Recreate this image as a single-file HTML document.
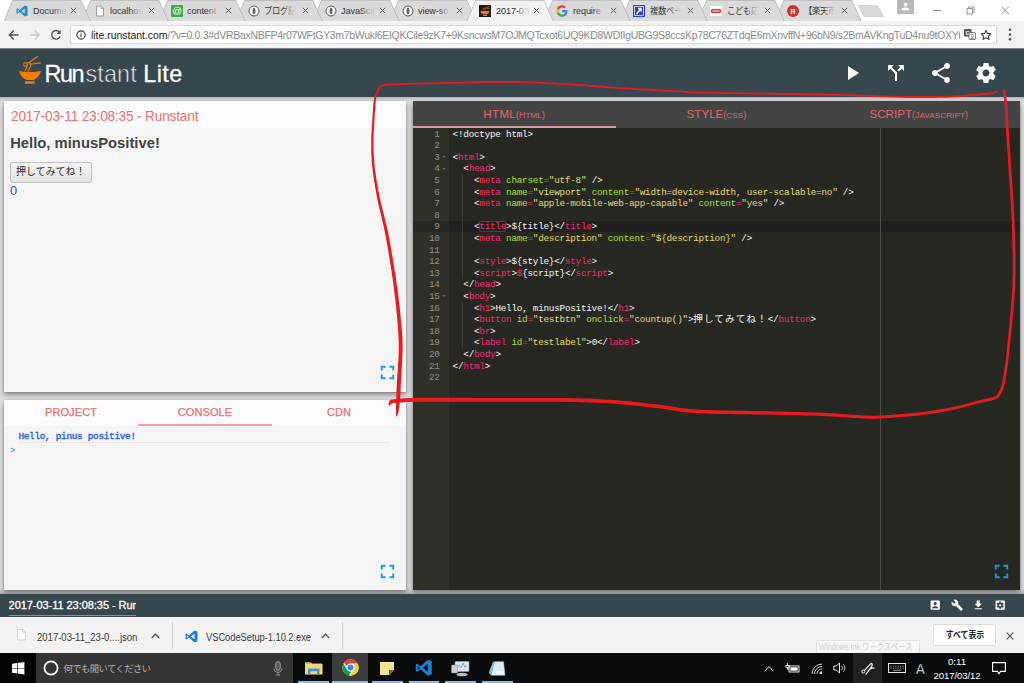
<!DOCTYPE html>
<html lang="ja">
<head>
<meta charset="utf-8">
<title>Runstant Lite</title>
<style>
*{box-sizing:border-box;margin:0;padding:0}
html,body{width:1024px;height:683px;overflow:hidden;background:#fff}
body{position:relative;font-family:"Liberation Sans","Noto Sans CJK JP",sans-serif;color:#333}
.abs{position:absolute}
svg{display:block;overflow:visible}
/* ---------- chrome tab strip ---------- */
#tabstrip{left:0;top:0;width:1024px;height:21px;background:#fff;overflow:hidden}
.tab{position:absolute;top:0;height:21px;width:90px;font-size:9.8px;line-height:20px;color:#333;white-space:nowrap}
.tab svg.shape{position:absolute;left:0;top:0}
.tab .lbl{position:absolute;left:28.600px;top:1px;width:36px;overflow:hidden;height:20px;letter-spacing:-0.1px;transform:scaleX(.93);transform-origin:0 0;width:34.500px}
.tab .lbl:after{content:"";position:absolute;right:0;top:0;width:14px;height:20px;background:linear-gradient(90deg,rgba(218,218,218,0),#dadada)}
.tab.act .lbl:after{background:linear-gradient(90deg,rgba(242,242,242,0),#f2f2f2)}
.tab .cj{font-size:9.300px;letter-spacing:-0.3px;transform:scaleX(.89)}
.tab .x{position:absolute;left:66px;top:7px;width:7px;height:7px}
.tab .fav{position:absolute;left:12px;top:5px;width:12px;height:12px}
/* ---------- toolbar ---------- */
#toolbar{left:0;top:21px;width:1024px;height:28px;background:#f2f2f2;border-bottom:1px solid #7d8489}
#urlbox{left:69.500px;top:4px;width:927.500px;height:19px;background:#fff;border:1px solid #d9d9d9;border-radius:2px;overflow:hidden}
#url{left:20.500px;top:0;font-size:10.5px;line-height:18px;white-space:nowrap;color:#8a8a8a;letter-spacing:-0.31px}
#url b{font-weight:normal;color:#222;letter-spacing:-0.03px}
/* ---------- app ---------- */
#header{left:0;top:49px;width:1024px;height:48px;background:#37474f}
#main{left:0;top:97px;width:1024px;height:497px;background:#dedede}
.card{position:absolute;box-shadow:0 2.5px 5px rgba(0,0,0,.42),0 0 2px rgba(0,0,0,.15)}
#footer{left:0;top:594px;width:1024px;height:23px;background:#37474f}
#dlbar{left:0;top:617px;width:1024px;height:36px;background:#f2f2f2}
#taskbar{left:0;top:653px;width:1024px;height:30px;background:#0a0b0d}
</style>
</head>
<body>
<div id="tabstrip" class="abs">
<div class="tab" style="left:775.4px"><svg class="shape" width="90" height="21" viewBox="0 0 90 21"><path d="M0 21 L8.500 0.500 H77 L86.200 21z" fill="#dadada"/><path d="M0 21 L8.500 0.500 H77 L86.200 21" fill="none" stroke="#b4b4b4" stroke-width="0.800"/></svg><svg class="fav" viewBox="0 0 24 24"><circle cx="12" cy="12" r="12" fill="#c9372c"/><text x="12" y="17" font-size="14" font-weight="bold" fill="#fff" text-anchor="middle" font-family="Liberation Sans,sans-serif">R</text></svg><span class="lbl cj">【楽天市</span><svg class="x" viewBox="0 0 10 10"><path stroke="#505050" stroke-width="1.300" fill="none" d="M1.200 1.200l7.600 7.600M8.800 1.200l-7.600 7.600"/></svg></div>
<div class="tab" style="left:698.3px"><svg class="shape" width="90" height="21" viewBox="0 0 90 21"><path d="M0 21 L8.500 0.500 H77 L86.200 21z" fill="#dadada"/><path d="M0 21 L8.500 0.500 H77 L86.200 21" fill="none" stroke="#b4b4b4" stroke-width="0.800"/></svg><svg class="fav" viewBox="0 0 24 24"><rect y="2" width="24" height="20" fill="#fff"/><rect x="1" y="8" width="22" height="8" rx="4" fill="#e53935"/><rect x="5" y="11" width="14" height="2" fill="#fff"/></svg><span class="lbl cj">こども応</span><svg class="x" viewBox="0 0 10 10"><path stroke="#505050" stroke-width="1.300" fill="none" d="M1.200 1.200l7.600 7.600M8.800 1.200l-7.600 7.600"/></svg></div>
<div class="tab" style="left:621.2px"><svg class="shape" width="90" height="21" viewBox="0 0 90 21"><path d="M0 21 L8.500 0.500 H77 L86.200 21z" fill="#dadada"/><path d="M0 21 L8.500 0.500 H77 L86.200 21" fill="none" stroke="#b4b4b4" stroke-width="0.800"/></svg><svg class="fav" viewBox="0 0 24 24"><rect width="24" height="24" fill="#2b3fd6"/><rect x="3" y="3" width="18" height="18" fill="none" stroke="#fff" stroke-width="1.500"/><path stroke="#fff" stroke-width="3" fill="none" d="M7 18L16 7M10 7h6v6"/></svg><span class="lbl cj">複数ペー</span><svg class="x" viewBox="0 0 10 10"><path stroke="#505050" stroke-width="1.300" fill="none" d="M1.200 1.200l7.600 7.600M8.800 1.200l-7.600 7.600"/></svg></div>
<div class="tab" style="left:544.1px"><svg class="shape" width="90" height="21" viewBox="0 0 90 21"><path d="M0 21 L8.500 0.500 H77 L86.200 21z" fill="#dadada"/><path d="M0 21 L8.500 0.500 H77 L86.200 21" fill="none" stroke="#b4b4b4" stroke-width="0.800"/></svg><svg class="fav" viewBox="0 0 24 24"><path fill="#4285f4" d="M23 12.300c0-.8-.1-1.600-.2-2.300H12v4.500h6.200c-.3 1.400-1.100 2.600-2.300 3.400v2.900h3.700C21.700 18.800 23 15.800 23 12.300z"/><path fill="#34a853" d="M12 23.500c3.100 0 5.700-1 7.600-2.800l-3.700-2.900c-1 .7-2.300 1.100-3.900 1.100-3 0-5.500-2-6.400-4.700H1.800v3C3.700 21 7.500 23.500 12 23.500z"/><path fill="#fbbc05" d="M5.600 14.200c-.2-.7-.4-1.400-.4-2.200s.1-1.500.4-2.200v-3H1.800C1 8.400.5 10.100.5 12s.5 3.600 1.300 5.200z"/><path fill="#ea4335" d="M12 5.100c1.700 0 3.200.6 4.400 1.700l3.300-3.300C17.700 1.600 15.100.5 12 .5 7.500.5 3.700 3 1.800 6.800l3.800 3C6.500 7.100 9 5.100 12 5.100z"/></svg><span class="lbl">require</span><svg class="x" viewBox="0 0 10 10"><path stroke="#505050" stroke-width="1.300" fill="none" d="M1.200 1.200l7.600 7.600M8.800 1.200l-7.600 7.600"/></svg></div>
<div class="tab" style="left:389.9px"><svg class="shape" width="90" height="21" viewBox="0 0 90 21"><path d="M0 21 L8.500 0.500 H77 L86.200 21z" fill="#dadada"/><path d="M0 21 L8.500 0.500 H77 L86.200 21" fill="none" stroke="#b4b4b4" stroke-width="0.800"/></svg><svg class="fav" viewBox="0 0 24 24"><circle cx="12" cy="12" r="10" fill="#fff" stroke="#555" stroke-width="2"/><ellipse cx="12" cy="12" rx="3" ry="6.500" fill="#666"/></svg><span class="lbl">view-so</span><svg class="x" viewBox="0 0 10 10"><path stroke="#505050" stroke-width="1.300" fill="none" d="M1.200 1.200l7.600 7.600M8.800 1.200l-7.600 7.600"/></svg></div>
<div class="tab" style="left:312.8px"><svg class="shape" width="90" height="21" viewBox="0 0 90 21"><path d="M0 21 L8.500 0.500 H77 L86.200 21z" fill="#dadada"/><path d="M0 21 L8.500 0.500 H77 L86.200 21" fill="none" stroke="#b4b4b4" stroke-width="0.800"/></svg><svg class="fav" viewBox="0 0 24 24"><circle cx="12" cy="12" r="10" fill="#fff" stroke="#555" stroke-width="2"/><ellipse cx="12" cy="12" rx="3" ry="6.500" fill="#666"/></svg><span class="lbl">JavaScri</span><svg class="x" viewBox="0 0 10 10"><path stroke="#505050" stroke-width="1.300" fill="none" d="M1.200 1.200l7.600 7.600M8.800 1.200l-7.600 7.600"/></svg></div>
<div class="tab" style="left:235.7px"><svg class="shape" width="90" height="21" viewBox="0 0 90 21"><path d="M0 21 L8.500 0.500 H77 L86.200 21z" fill="#dadada"/><path d="M0 21 L8.500 0.500 H77 L86.200 21" fill="none" stroke="#b4b4b4" stroke-width="0.800"/></svg><svg class="fav" viewBox="0 0 24 24"><circle cx="12" cy="12" r="10" fill="#fff" stroke="#555" stroke-width="2"/><ellipse cx="12" cy="12" rx="3" ry="6.500" fill="#666"/></svg><span class="lbl cj">ブログ記</span><svg class="x" viewBox="0 0 10 10"><path stroke="#505050" stroke-width="1.300" fill="none" d="M1.200 1.200l7.600 7.600M8.800 1.200l-7.600 7.600"/></svg></div>
<div class="tab" style="left:158.6px"><svg class="shape" width="90" height="21" viewBox="0 0 90 21"><path d="M0 21 L8.500 0.500 H77 L86.200 21z" fill="#dadada"/><path d="M0 21 L8.500 0.500 H77 L86.200 21" fill="none" stroke="#b4b4b4" stroke-width="0.800"/></svg><svg class="fav" viewBox="0 0 24 24"><rect width="24" height="24" rx="2" fill="#3fae4a"/><text x="12" y="17.500" font-size="19" font-weight="normal" fill="#fff" text-anchor="middle" font-family="Liberation Sans,sans-serif">@</text></svg><span class="lbl">content</span><svg class="x" viewBox="0 0 10 10"><path stroke="#505050" stroke-width="1.300" fill="none" d="M1.200 1.200l7.600 7.600M8.800 1.200l-7.600 7.600"/></svg></div>
<div class="tab" style="left:81.5px"><svg class="shape" width="90" height="21" viewBox="0 0 90 21"><path d="M0 21 L8.500 0.500 H77 L86.200 21z" fill="#dadada"/><path d="M0 21 L8.500 0.500 H77 L86.200 21" fill="none" stroke="#b4b4b4" stroke-width="0.800"/></svg><svg class="fav" viewBox="0 0 24 24"><path fill="#fafafa" stroke="#8a8a8a" stroke-width="1.6" d="M5 2h9l5 5v15H5z"/><path fill="none" stroke="#8a8a8a" stroke-width="1.4" d="M14 2v5h5"/></svg><span class="lbl">localhos</span><svg class="x" viewBox="0 0 10 10"><path stroke="#505050" stroke-width="1.300" fill="none" d="M1.200 1.200l7.600 7.600M8.800 1.200l-7.600 7.600"/></svg></div>
<div class="tab" style="left:4.4px"><svg class="shape" width="90" height="21" viewBox="0 0 90 21"><path d="M0 21 L8.500 0.500 H77 L86.200 21z" fill="#dadada"/><path d="M0 21 L8.500 0.500 H77 L86.200 21" fill="none" stroke="#b4b4b4" stroke-width="0.800"/></svg><svg class="fav" viewBox="0 0 24 24"><path fill="#2489ca" d="M17.5 1L7.6 10 3 6.500 1 7.500v9L3 17.500 7.600 14 17.500 23 23 20.800V3.200zM3.500 14.600V9.400L6.200 12zm14 2.600L10.600 12l6.900-5.200z"/></svg><span class="lbl">Docume</span><svg class="x" viewBox="0 0 10 10"><path stroke="#505050" stroke-width="1.300" fill="none" d="M1.200 1.200l7.600 7.600M8.800 1.200l-7.600 7.600"/></svg></div>
<div class="tab act" style="left:467.0px"><svg class="shape" width="90" height="21" viewBox="0 0 90 21"><path d="M0 21 L8.500 0.500 H77 L86.200 21z" fill="#f2f2f2"/><path d="M0 21 L8.500 0.500 H77 L86.200 21" fill="none" stroke="#b9b9b9" stroke-width="0.800"/></svg><svg class="fav" viewBox="0 0 24 24"><rect width="24" height="24" fill="#1f1a14"/><path fill="#f57c00" d="M3 12h18c0 4-3.500 7-9 7s-9-3-9-7zM8 20h8v2H8z"/><path stroke="#f57c00" stroke-width="1.300" fill="none" d="M9 11c-2-3 0-6 2-5s0 4 1 5M12 6l8-3M13 8l8-1"/></svg><span class="lbl">2017-03</span><svg class="x" viewBox="0 0 10 10"><path stroke="#505050" stroke-width="1.300" fill="none" d="M1.200 1.200l7.600 7.600M8.800 1.200l-7.600 7.600"/></svg></div>
<svg class="abs" style="left:858px;top:5px" width="27" height="12" viewBox="0 0 27 12"><path d="M0 0.500H19.500L25.500 11.500H6z" fill="#d8d8d8" stroke="#c4c4c4" stroke-width=".6"/></svg>
<div class="abs" style="left:897px;top:0;width:17px;height:14px;background:#b9b9b9"><svg class="abs" style="left:4px;top:2px" width="9" height="9" viewBox="0 0 24 24"><path fill="#fff" d="M12 12c2.800 0 5-2.200 5-5s-2.200-5-5-5-5 2.200-5 5 2.200 5 5 5zm0 2.500c-3.300 0-10 1.700-10 5V22h20v-2.500c0-3.300-6.700-5-10-5z"/></svg></div>
<svg class="abs" style="left:930px;top:4px" width="90" height="14" viewBox="0 0 90 14"><path stroke="#8a8a8a" stroke-width="1" fill="none" d="M3 6.500h8"/><path stroke="#8a8a8a" stroke-width=".9" fill="none" d="M37 4.500h5.500v5.500H37zM38.500 4.500V3H44v5.500h-1.500"/><path stroke="#8a8a8a" stroke-width=".9" fill="none" d="M71.500 2.500l7.500 7.500M79 2.500l-7.500 7.500"/></svg>
</div>
<div id="toolbar" class="abs">
<svg class="abs" style="left:8px;top:8px" width="56" height="12" viewBox="0 0 56 12"><path stroke="#505050" stroke-width="1.300" fill="none" d="M10.500 6H1.500M5.800 1.500L1.300 6l4.500 4.500"/><path stroke="#c8c8c8" stroke-width="1.300" fill="none" d="M22 6h9M26.700 1.500L31.200 6l-4.500 4.500"/><path stroke="#505050" stroke-width="1.400" fill="none" d="M51.300 3A4.300 4.300 0 1 0 52 7.500"/><path fill="#505050" d="M52.600 0.800v4.200h-4.200z"/></svg>
<div id="urlbox" class="abs">
<svg class="abs" style="left:5px;top:4px" width="10" height="10" viewBox="0 0 20 20"><circle cx="10" cy="10" r="8.300" fill="none" stroke="#3a3a3a" stroke-width="2.200"/><path stroke="#3a3a3a" stroke-width="2.200" d="M10 8.500v6M10 4.800v2.200"/></svg>
<div id="url" class="abs"><b>lite.runstant.com</b>/?v=0.0.3#dVRBaxNBFP4r07WFtGY3m7bWukl6EIQKCile9zK7+9KsncwsM7OJMQTcxot6UQ9KD8WDIIgUBG9S8ccsKp78C76ZTdqE6mXnvffN+96bN9/s2BmAVKngTuD4nu9tOXYtdqOk</div>
<div class="abs" style="left:889px;top:0;width:38px;height:17px;background:#fff"></div>
<svg class="abs" style="left:893.500px;top:3px" width="12" height="11" viewBox="0 0 24 22"><rect x="0" y="0" width="15" height="15" rx="1.500" fill="#555"/><text x="7.500" y="12" font-size="11" fill="#fff" text-anchor="middle" font-family="Liberation Sans,sans-serif" font-weight="bold">G</text><rect x="10" y="7" width="13" height="14" rx="1.500" fill="#fff" stroke="#555" stroke-width="1.500"/><text x="16.500" y="18.500" font-size="10" fill="#555" text-anchor="middle" font-family="Noto Sans CJK JP,sans-serif">文</text></svg>
<svg class="abs" style="left:909.500px;top:3px" width="12" height="12" viewBox="0 0 24 24"><path fill="none" stroke="#444" stroke-width="2.200" stroke-linejoin="round" d="M12 2.500l2.900 6.300 6.800.700-5.100 4.600 1.500 6.800L12 17.400l-6.100 3.500 1.500-6.800L2.300 9.500l6.800-.7z"/></svg>
</div>
<svg class="abs" style="left:1008px;top:7px" width="4" height="13" viewBox="0 0 4 13"><circle cx="2" cy="1.700" r="1.300" fill="#555"/><circle cx="2" cy="6.500" r="1.300" fill="#555"/><circle cx="2" cy="11.300" r="1.300" fill="#555"/></svg>
</div>
<style>
#logo{left:17px;top:5px}
#brand{left:44.600px;top:10.500px;font-size:23.400px;line-height:28px;color:#fff;white-space:nowrap}
#brand .r{letter-spacing:-1.5px;-webkit-text-stroke:.28px #fff}
#brand .s{color:#eef1f2;font-weight:normal;letter-spacing:0.15px;-webkit-text-stroke:.62px #37474f;margin-left:2.4px}
#brand .l{letter-spacing:0.4px;margin-left:6.400px;-webkit-text-stroke:.28px #fff}
.hic{position:absolute;top:12.300px;width:24px;height:24px}
#c1{left:4px;top:4px;width:402px;height:290.500px;background:#f5f5f5}
#c1 .ttl{left:0;top:0;width:100%;height:27px;background:#fafafa}
#c1 .ttl span{position:absolute;left:7.200px;top:7px;font-size:14.400px;line-height:16px;letter-spacing:-0.18px;transform:scaleX(.948);transform-origin:0 0;color:#e57373;white-space:nowrap}
#c1 h1{position:absolute;left:6.200px;top:33.300px;font-size:14.800px;line-height:18px;font-weight:bold;color:#444;white-space:nowrap}
#c1 .btn{left:5.500px;top:61px;width:82.500px;height:20.500px;border:1px solid #c3c3c3;border-radius:2px;background:linear-gradient(#f4f4f4,#e2e2e2);font-size:10px;line-height:18.500px;text-align:center;color:#2c2c2c;font-family:"Liberation Sans","Noto Sans CJK JP",sans-serif;white-space:nowrap}
#c1 .zero{left:6px;top:83px;font-size:12.800px;line-height:14px;color:#4343ff}
#c2{left:4px;top:302.500px;width:402px;height:190.500px;background:#f5f5f5}
#c2 .tabs{left:0;top:0;width:100%;height:26.500px;background:#fafafa}
#c2 .tabs span{position:absolute;top:6.400px;-webkit-text-stroke:.25px #e57373;width:134px;text-align:center;font-size:11px;line-height:13px;color:#e57373;letter-spacing:0.1px}
#c2 .ind{left:134px;top:24.700px;width:134px;height:1.700px;background:#f0a0a0}
#c2 .log{left:14.400px;top:31.500px;width:372px;height:12.400px;border-bottom:1px solid #e6e6e6;font-family:"Liberation Mono",monospace;font-weight:normal;-webkit-text-stroke:.4px #2c62f0;font-size:9.300px;line-height:12px;letter-spacing:-0.244px;color:#2c62f0;white-space:pre}
#c2 .pr{left:6px;top:45px;font-family:"Liberation Mono",monospace;font-weight:bold;font-size:8.600px;line-height:12px;color:#5aa7e8}
#ed{left:413px;top:4px;width:607px;height:489px;background:#272822;overflow:hidden}
#ed .tabs{left:0;top:0;width:100%;height:27px;background:#444}
#ed .tabs .t{position:absolute;top:6px;width:202.300px;text-align:center;font-size:11.600px;line-height:14px;color:#e0676b;white-space:nowrap}
#ed .tabs .t small{font-size:8.700px;letter-spacing:0.1px}
#ed .tabs .t small b{font-weight:normal;font-size:8.100px;letter-spacing:0.1px}
#ed .ind{left:0;top:25px;width:203px;height:2px;background:#d89ca0}
#ed .gutter{left:0;top:27px;width:36px;height:462px;background:#2f3129}
#ed .actl{left:0;top:119.800px;width:607px;height:11.600px;background:#202020}
#ed .actg{left:0;top:119.800px;width:36px;height:11.600px;background:#272727}
#ed .pm{left:466.700px;top:27px;width:1px;height:462px;background:#4b4c47}
#ed .guide{width:1px;background:#3b3a32;left:48.900px}
.ln,.gn{position:absolute;height:11.600px;line-height:11.600px;font-family:"Liberation Mono",monospace;font-size:9.300px;white-space:pre}
.ln{left:39.600px;letter-spacing:-0.235px;color:#f8f8f2}
.gn{left:0;width:26.500px;text-align:right;color:#8f908a;letter-spacing:-0.280px}
.gn .fold{position:absolute;left:29px;top:4.500px;border-left:2px solid transparent;border-right:2px solid transparent;border-top:2.500px solid #66675f}
.w{color:#f8f8f2}.p{color:#f92672}.g{color:#a6e22e}.y{color:#e6db74}
.jp{font-family:"Noto Sans CJK JP",sans-serif;font-size:9.600px;letter-spacing:1.090px;line-height:1px}
.box{box-shadow:inset 0 0 0 1px #454545}
.fic{position:absolute;top:5.300px;width:12.400px;height:12.400px}
#footer .t{left:8.600px;top:4px;width:127.500px;height:17.800px;border-bottom:1px solid #87939a;-webkit-text-stroke:.3px #fff;font-size:11px;line-height:14px;color:#fff;white-space:nowrap;overflow:hidden;letter-spacing:-0.05px}
</style>
<div id="header" class="abs">
<svg id="logo" class="abs" width="26" height="31" viewBox="0 0 26 31">
<path fill="#f57c00" d="M2.200 16.700c3 1.700 16.500 1.700 21.600 0 -.4 4.600-4 7.800-7.300 9.200H9.600C6.200 24.500 2.700 21.300 2.200 16.700zM8.200 27.300h9.200l.5 2.400H7.700z"/>
<path fill="none" stroke="#f57c00" stroke-width="1.100" stroke-linecap="round" d="M12.100 8.500L20.300 2.700M13.400 10.200L23.600 8.850"/>
<circle cx="8.500" cy="10.600" r="1.900" fill="none" stroke="#f57c00" stroke-width="1.100"/>
<path fill="none" stroke="#f57c00" stroke-width="1.100" stroke-linecap="round" d="M9.900 9.100c1-.5 2.100-.4 2.900 0M9.800 12c.5 1.100-.2 1.800-.6 2.800s-.9 1.500-1.300 2.300M12.800 9.100c.9.900 1 2.200.5 3.500-.5 1.300-1.300 2.900-2 5"/>
</svg>
<div id="brand" class="abs"><span class="r">Run</span><span class="s">stant</span><span class="l">Lite</span></div>
<svg class="hic" style="left:840.200px" viewBox="0 0 24 24"><path fill="#fff" d="M8 5v14l11-7z"/></svg>
<svg class="hic" style="left:884px" viewBox="0 0 24 24"><path fill="#fff" d="M14 4l2.290 2.290-2.880 2.880 1.420 1.420 2.880-2.880L20 10V4zm-4 0H4v6l2.290-2.290 4.710 4.700V20h2v-8.410l-5.290-5.300z"/></svg>
<svg class="hic" style="left:929px" viewBox="0 0 24 24"><path fill="#fff" d="M18 16.080c-.76 0-1.440.3-1.960.77L8.910 12.700c.05-.23.090-.46.090-.7s-.04-.47-.09-.7l7.050-4.110c.54.5 1.250.81 2.040.81 1.660 0 3-1.340 3-3s-1.340-3-3-3-3 1.340-3 3c0 .24.040.47.090.7L8.040 9.810C7.500 9.310 6.790 9 6 9c-1.660 0-3 1.340-3 3s1.340 3 3 3c.79 0 1.500-.31 2.040-.81l7.120 4.160c-.05.21-.08.43-.08.65 0 1.610 1.310 2.920 2.920 2.920 1.610 0 2.920-1.310 2.920-2.920s-1.310-2.920-2.920-2.920z"/></svg>
<svg class="hic" style="left:973.900px" viewBox="0 0 24 24"><path fill="#fff" d="M19.430 12.980c.04-.32.070-.64.070-.98s-.03-.66-.07-.98l2.110-1.650c.19-.15.240-.42.120-.64l-2-3.460c-.12-.22-.39-.3-.61-.22l-2.490 1c-.52-.4-1.080-.73-1.690-.98l-.38-2.650C14.460 2.180 14.250 2 14 2h-4c-.25 0-.46.180-.49.420l-.38 2.650c-.61.250-1.170.59-1.690.98l-2.490-1c-.23-.09-.49 0-.61.220l-2 3.460c-.13.220-.07.490.12.640l2.110 1.650c-.04.320-.07.650-.07.980s.03.660.07.980l-2.110 1.650c-.19.150-.24.420-.12.640l2 3.460c.12.220.39.300.61.220l2.490-1c.52.400 1.080.73 1.690.98l.38 2.650c.03.240.24.420.49.420h4c.25 0 .46-.18.490-.42l.38-2.650c.61-.25 1.170-.59 1.690-.98l2.490 1c.23.090.49 0 .61-.22l2-3.460c.12-.22.070-.49-.12-.64l-2.110-1.650zM12 15.500c-1.930 0-3.500-1.570-3.500-3.500s1.570-3.500 3.500-3.500 3.500 1.570 3.500 3.500-1.570 3.500-3.500 3.500z"/></svg>
</div>
<div id="main" class="abs">
<div class="abs" style="left:0;top:0;width:1024px;height:4px;background:linear-gradient(#b0b4b6,#dedede)"></div>
<div class="abs" style="left:0;top:492px;width:1024px;height:5px;background:linear-gradient(rgba(0,0,0,0.02),rgba(0,0,0,.22))"></div>
<div id="c1" class="card">
<div class="ttl abs"><span>2017-03-11 23:08:35 - Runstant</span></div>
<h1>Hello, minusPositive!</h1>
<div class="btn abs">押してみてね！</div>
<div class="zero abs">0</div>
<svg class="abs" style="left:372px;top:260.3px" width="23" height="23" viewBox="0 0 24 24"><path fill="#119bea" d="M7 14H5v5h5v-2H7v-3zm-2-4h2V7h3V5H5v5zm12 7h-3v2h5v-5h-2v3zM14 5v2h3v3h2V5h-5z"/></svg>
</div>
<div id="c2" class="card">
<div class="tabs abs"><span style="left:0">PROJECT</span><span style="left:134px">CONSOLE</span><span style="left:268px">CDN</span></div>
<div class="ind abs"></div>
<div class="log abs">Hello, pinus positive!</div>
<div class="pr abs">&gt;</div>
<svg class="abs" style="left:372px;top:160.6px" width="23" height="23" viewBox="0 0 24 24"><path fill="#119bea" d="M7 14H5v5h5v-2H7v-3zm-2-4h2V7h3V5H5v5zm12 7h-3v2h5v-5h-2v3zM14 5v2h3v3h2V5h-5z"/></svg>
</div>
<div id="ed" class="card">
<div class="tabs abs"><div class="t" style="left:0;letter-spacing:.3px">HTML<small>(H<b>TML</b>)</small></div><div class="t" style="left:202.300px">STYLE<small>(<b>CSS</b>)</small></div><div class="t" style="left:404.600px">SCRIPT<small>(J<b>AVASCRIPT</b>)</small></div></div>
<div class="ind abs"></div>
<div class="gutter abs"></div>
<div class="actl abs"></div>
<div class="actg abs"></div>
<div class="pm abs"></div>
<div class="guide abs" style="top:73.400px;height:104.400px"></div>
<div class="guide abs" style="top:201px;height:46.400px"></div>
<div class="gn" style="top:27.5px">1</div>
<div class="gn" style="top:39.1px">2</div>
<div class="gn" style="top:50.7px">3<i class="fold"></i></div>
<div class="gn" style="top:62.3px">4<i class="fold"></i></div>
<div class="gn" style="top:73.9px">5</div>
<div class="gn" style="top:85.5px">6</div>
<div class="gn" style="top:97.1px">7</div>
<div class="gn" style="top:108.7px">8</div>
<div class="gn" style="top:120.3px">9</div>
<div class="gn" style="top:131.9px">10</div>
<div class="gn" style="top:143.5px">11</div>
<div class="gn" style="top:155.1px">12</div>
<div class="gn" style="top:166.7px">13</div>
<div class="gn" style="top:178.3px">14</div>
<div class="gn" style="top:189.9px">15<i class="fold"></i></div>
<div class="gn" style="top:201.5px">16</div>
<div class="gn" style="top:213.1px">17</div>
<div class="gn" style="top:224.7px">18</div>
<div class="gn" style="top:236.3px">19</div>
<div class="gn" style="top:247.9px">20</div>
<div class="gn" style="top:259.5px">21</div>
<div class="gn" style="top:271.1px">22</div>
<div class="ln" style="top:27.5px"><span class="w">&lt;!doctype html&gt;</span></div>
<div class="ln" style="top:39.1px"></div>
<div class="ln" style="top:50.7px"><span class="w">&lt;</span><span class="p">html</span><span class="w">&gt;</span></div>
<div class="ln" style="top:62.3px"><span class="w">  </span><span class="w">&lt;</span><span class="p">head</span><span class="w">&gt;</span></div>
<div class="ln" style="top:73.9px"><span class="w">    &lt;</span><span class="p">meta</span><span class="w"> </span><span class="g">charset</span><span class="p">=</span><span class="y">"utf-8"</span><span class="w"> /&gt;</span></div>
<div class="ln" style="top:85.5px"><span class="w">    &lt;</span><span class="p">meta</span><span class="w"> </span><span class="g">name</span><span class="p">=</span><span class="y">"viewport"</span><span class="w"> </span><span class="g">content</span><span class="p">=</span><span class="y">"width=device-width, user-scalable=no"</span><span class="w"> /&gt;</span></div>
<div class="ln" style="top:97.1px"><span class="w">    &lt;</span><span class="p">meta</span><span class="w"> </span><span class="g">name</span><span class="p">=</span><span class="y">"apple-mobile-web-app-capable"</span><span class="w"> </span><span class="g">content</span><span class="p">=</span><span class="y">"yes"</span><span class="w"> /&gt;</span></div>
<div class="ln" style="top:108.7px"></div>
<div class="ln" style="top:120.3px"><span class="w">    &lt;</span><span class="p box">title</span><span class="w">&gt;${title}&lt;/</span><span class="p">title</span><span class="w">&gt;</span></div>
<div class="ln" style="top:131.9px"><span class="w">    &lt;</span><span class="p">meta</span><span class="w"> </span><span class="g">name</span><span class="p">=</span><span class="y">"description"</span><span class="w"> </span><span class="g">content</span><span class="p">=</span><span class="y">"${description}"</span><span class="w"> /&gt;</span></div>
<div class="ln" style="top:143.5px"></div>
<div class="ln" style="top:155.1px"><span class="w">    &lt;</span><span class="p">style</span><span class="w">&gt;${style}&lt;/</span><span class="p">style</span><span class="w">&gt;</span></div>
<div class="ln" style="top:166.7px"><span class="w">    &lt;</span><span class="p">script</span><span class="w">&gt;</span><span class="p">$</span><span class="w">{script}&lt;/</span><span class="p">script</span><span class="w">&gt;</span></div>
<div class="ln" style="top:178.3px"><span class="w">  </span><span class="w">&lt;/</span><span class="p">head</span><span class="w">&gt;</span></div>
<div class="ln" style="top:189.9px"><span class="w">  </span><span class="w">&lt;</span><span class="p">body</span><span class="w">&gt;</span></div>
<div class="ln" style="top:201.5px"><span class="w">    </span><span class="w">&lt;</span><span class="p">h1</span><span class="w">&gt;</span><span class="w">Hello, minusPositive!</span><span class="w">&lt;/</span><span class="p">h1</span><span class="w">&gt;</span></div>
<div class="ln" style="top:213.1px"><span class="w">    &lt;</span><span class="p">button</span><span class="w"> </span><span class="g">id</span><span class="p">=</span><span class="y">"testbtn"</span><span class="w"> </span><span class="g">onclick</span><span class="p">=</span><span class="y">"countup()"</span><span class="w">&gt;</span><span class="w jp">押してみてね！</span><span class="w">&lt;/</span><span class="p">button</span><span class="w">&gt;</span></div>
<div class="ln" style="top:224.7px"><span class="w">    </span><span class="w">&lt;</span><span class="p">br</span><span class="w">&gt;</span></div>
<div class="ln" style="top:236.3px"><span class="w">    &lt;</span><span class="p">label</span><span class="w"> </span><span class="g">id</span><span class="p">=</span><span class="y">"testlabel"</span><span class="w">&gt;0&lt;/</span><span class="p">label</span><span class="w">&gt;</span></div>
<div class="ln" style="top:247.9px"><span class="w">  </span><span class="w">&lt;/</span><span class="p">body</span><span class="w">&gt;</span></div>
<div class="ln" style="top:259.5px"><span class="w">&lt;/</span><span class="p">html</span><span class="w">&gt;</span></div>
<div class="ln" style="top:271.1px"></div>
<svg class="abs" style="left:577px;top:458.8px" width="23" height="23" viewBox="0 0 24 24"><path fill="#119bea" d="M7 14H5v5h5v-2H7v-3zm-2-4h2V7h3V5H5v5zm12 7h-3v2h5v-5h-2v3zM14 5v2h3v3h2V5h-5z"/></svg>
</div>
</div>
<div id="footer" class="abs">
<div class="t abs">2017-03-11 23:08:35 - Runstant</div>
<svg class="fic" style="left:929.400px" viewBox="0 0 24 24"><path fill="#fff" d="M3 5v14c0 1.100.89 2 2 2h14c1.100 0 2-.9 2-2V5c0-1.100-.9-2-2-2H5c-1.110 0-2 .9-2 2zm12 4c0 1.660-1.340 3-3 3s-3-1.340-3-3 1.340-3 3-3 3 1.340 3 3zm-9 8c0-2 4-3.100 6-3.100s6 1.100 6 3.100v1H6v-1z"/></svg>
<svg class="fic" style="left:950.800px" viewBox="0 0 24 24"><path fill="#fff" d="M22.700 19l-9.100-9.100c.9-2.300.4-5-1.500-6.900-2-2-5-2.400-7.400-1.300L9 6 6 9 1.600 4.700C.4 7.100.9 10.100 2.900 12.100c1.900 1.900 4.600 2.400 6.900 1.500l9.100 9.100c.4.4 1 .4 1.400 0l2.300-2.300c.5-.4.5-1.100.1-1.400z"/></svg>
<svg class="fic" style="left:972.400px" viewBox="0 0 24 24"><path fill="#fff" d="M19 9h-4V3H9v6H5l7 7 7-7zM5 18v2h14v-2H5z"/></svg>
<svg class="fic" style="left:993.800px" viewBox="0 0 24 24"><path fill="#fff" d="M12 10c-1.100 0-2 .9-2 2s.9 2 2 2 2-.9 2-2-.9-2-2-2zm7-7H5c-1.110 0-2 .9-2 2v14c0 1.100.89 2 2 2h14c1.110 0 2-.9 2-2V5c0-1.100-.89-2-2-2zm-1.750 9c0 .23-.02.46-.05.68l1.480 1.160c.13.11.17.3.08.45l-1.400 2.420c-.09.15-.27.21-.43.15l-1.740-.7c-.36.28-.76.51-1.180.69l-.26 1.850c-.03.17-.18.3-.35.3h-2.800c-.17 0-.32-.13-.35-.29l-.26-1.850c-.43-.18-.82-.41-1.180-.69l-1.740.7c-.16.06-.34 0-.43-.15l-1.400-2.420c-.09-.15-.05-.34.08-.45l1.480-1.160c-.03-.23-.05-.46-.05-.69 0-.23.02-.46.05-.68l-1.480-1.160c-.13-.11-.17-.3-.08-.45l1.400-2.420c.09-.15.27-.21.43-.15l1.740.7c.36-.28.76-.51 1.180-.69l.26-1.850c.03-.17.18-.3.35-.3h2.800c.17 0 .32.130.35.290l.26 1.850c.43.180.82.410 1.180.690l1.740-.7c.16-.06.34 0 .43.150l1.400 2.420c.09.150.05.340-.08.450l-1.480 1.160c.03.230.05.460.05.690z"/></svg>
</div>
<style>
#dlbar{font-size:10px;color:#444}
#dlbar .fn{position:absolute;top:13.500px;line-height:14px;white-space:nowrap;letter-spacing:-0.05px;color:#3a3a3a;transform:scaleX(.962);transform-origin:0 0}
#dlbar .sep{position:absolute;top:5.200px;width:1px;height:26.500px;background:#cfcfcf}
#dlbar .chev{position:absolute;top:16px}
#showall{left:933px;top:7px;width:63px;height:21.500px;background:#fff;border:1px solid #dcdcdc;border-radius:2px;font-size:9.400px;line-height:19.500px;text-align:center;color:#222;font-weight:bold;white-space:nowrap}
#showall span{display:inline-block;transform:scaleX(.84)}
#tip{left:815.500px;top:23px;width:104px;height:14px;background:#f7f7f7;border:1px solid #e1e1e1;font-size:9.400px;line-height:12px;color:#cfcfcf;white-space:nowrap;padding-left:2px;letter-spacing:-0.1px;overflow:hidden}
#tip span{display:inline-block;transform:scaleX(.79);transform-origin:0 0}
#taskbar .start{left:0;top:0;width:36px;height:30px;background:#040404}
#taskbar .search{left:36px;top:0;width:257px;height:30px;background:#343434}
#taskbar .search span{position:absolute;left:27.500px;top:8.500px;font-size:9.300px;line-height:14px;color:#b4b4b4;white-space:nowrap;letter-spacing:-0.55px}
#taskbar .ul{position:absolute;top:27.600px;height:2.400px;background:#84bdee}
#taskbar .clock{position:absolute;left:925px;width:64px;text-align:center;color:#fff;font-size:9.600px;line-height:12px;white-space:nowrap}
</style>
<div id="dlbar" class="abs">
<svg class="abs" style="left:16.500px;top:12px" width="9" height="11.500" viewBox="0 0 9 11.500"><path d="M.5.5h5.300L8.500 3.200v7.800H.5z" fill="#fdfdfd" stroke="#c9c9c9" stroke-width=".8"/><path d="M5.800.5v2.700h2.700" fill="none" stroke="#c9c9c9" stroke-width=".7"/></svg>
<span class="fn" style="left:37px">2017-03-11_23-0....json</span>
<svg class="chev" style="left:151px" width="9" height="6" viewBox="0 0 9 6"><path d="M.8 5L4.500 1.200 8.200 5" fill="none" stroke="#505050" stroke-width="1.300"/></svg>
<div class="sep" style="left:172px"></div>
<svg class="abs" style="left:184.500px;top:12.500px" width="13" height="13" viewBox="0 0 24 24"><path fill="#1f7fd0" d="M17.500 1L7.600 10 3 6.500 1 7.500v9L3 17.500 7.600 14l9.900 9L23 20.800V3.200zM3.500 14.600V9.400L6.200 12zm14 2.600L10.600 12l6.900-5.200z"/></svg>
<span class="fn" style="left:206.300px;transform:scaleX(.935)">VSCodeSetup-1.10.2.exe</span>
<svg class="chev" style="left:320.500px" width="9" height="6" viewBox="0 0 9 6"><path d="M.8 5L4.500 1.200 8.200 5" fill="none" stroke="#505050" stroke-width="1.300"/></svg>
<div class="sep" style="left:342px"></div>
<div id="showall" class="abs"><span>すべて表示</span></div>
<svg class="abs" style="left:1006px;top:14.500px" width="8" height="8" viewBox="0 0 8 8"><path d="M.7.700l6.600 6.600M7.300.700L.7 7.300" stroke="#555" stroke-width="1.200" fill="none"/></svg>
<div id="tip" class="abs"><span>Windows Ink ワークスペース</span></div>
</div>
<div id="taskbar" class="abs">
<div class="start abs"><svg class="abs" style="left:12px;top:8.700px" width="12.400" height="12.400" viewBox="0 0 24 24"><path fill="#fff" d="M0 3.400L9.800 2v9.500H0zM11 1.800L24 0v11.500H11zM0 12.600h9.800v9.500L0 20.700zM11 12.600h13V24l-13-1.800z"/></svg></div>
<div class="search abs">
<svg class="abs" style="left:6.800px;top:7.400px" width="16" height="16" viewBox="0 0 16 16"><circle cx="8" cy="8" r="6.600" fill="none" stroke="#fff" stroke-width="1.700"/></svg>
<span>何でも聞いてください</span>
<svg class="abs" style="left:237px;top:7.500px" width="10" height="15" viewBox="0 0 10 15"><rect x="2.800" y=".7" width="4.400" height="8.600" rx="2.200" fill="#555" stroke="#a8a8a8" stroke-width=".9"/><path d="M1 7.500c0 2.300 1.800 3.800 4 3.800s4-1.500 4-3.800M5 11.300v2.500M3 14h4" fill="none" stroke="#a0a0a0" stroke-width=".9"/></svg>
</div>
<!-- chrome active bg -->
<div class="abs" style="left:332.400px;top:0;width:35.600px;height:30px;background:#3c3c3c"></div>
<!-- explorer -->
<svg class="abs" style="left:305px;top:8px" width="18" height="14" viewBox="0 0 18 14"><path fill="#e9b93f" d="M0 1.200h6l1.200 1.400H17v2H0z"/><rect x="0" y="3" width="17.500" height="10.500" fill="#f8d775"/><path fill="#3b97e3" d="M3 7.500h11.500v6H12v-3.200H5.500v3.200H3z"/></svg>
<!-- chrome -->
<svg class="abs" style="left:341.600px;top:6.300px" width="17" height="17" viewBox="0 0 48 48"><circle cx="24" cy="24" r="23" fill="#fff"/><path fill="#db4437" d="M24 1a23 23 0 0 1 19.900 11.500H24a11.500 11.500 0 0 0-10.800 7.600L5.400 10.600A23 23 0 0 1 24 1z"/><path fill="#0f9d58" d="M4.100 12.500l9.900 17.200a11.500 11.500 0 0 0 12.500 5.500L19.800 46.600A23 23 0 0 1 4.100 12.500z"/><path fill="#ffcd40" d="M44.900 14.500A23 23 0 0 1 22.300 47l9.600-17.200a11.500 11.500 0 0 0 .5-15.300z"/><circle cx="24" cy="24" r="10.300" fill="#fff"/><circle cx="24" cy="24" r="8.300" fill="#4285f4"/></svg>
<!-- sticky -->
<svg class="abs" style="left:380px;top:9px" width="14" height="13" viewBox="0 0 14 13"><path fill="#f5e48b" d="M0 0h14v8l-5 5H0z"/><path fill="#6b6440" d="M14 8l-5 5V8z"/></svg>
<!-- vscode -->
<svg class="abs" style="left:415px;top:5.700px" width="17.500" height="17.500" viewBox="0 0 24 24"><path fill="#1b7fd3" d="M17.500 1L7.600 10 3 6.500 1 7.500v9L3 17.500 7.600 14l9.900 9L23 20.800V3.200zM3.500 14.600V9.400L6.200 12zm14 2.600L10.600 12l6.900-5.200z"/></svg>
<!-- device -->
<svg class="abs" style="left:451px;top:7.500px" width="19" height="16" viewBox="0 0 19 16"><rect x="4" y=".5" width="14" height="10" rx="1" fill="#dfe5ea" stroke="#9aa3aa" stroke-width=".6"/><path d="M6 8l2-4 2 3 2-5 2 4 2-2" fill="none" stroke="#6aa6d8" stroke-width=".9"/><rect x=".5" y="4" width="6" height="8" rx=".8" fill="#c9ced2" stroke="#8e979e" stroke-width=".5"/><ellipse cx="11" cy="13.500" rx="5.500" ry="1.800" fill="#b8bfc5"/></svg>
<!-- notepad -->
<svg class="abs" style="left:488px;top:7.500px" width="18" height="16" viewBox="0 0 18 16"><path d="M6.500.8h9l1.500 13.500H3z" fill="#e8f3f8" stroke="#9fc3d2" stroke-width=".6"/><path d="M6.500.8L3 14.300.8 11.500 5 .8z" fill="#7fc3d6"/><path d="M6 3h9M5.600 5h9.700M5.200 7h10.300M4.800 9h10.800" stroke="#c0d9e2" stroke-width=".6"/></svg>
<div class="ul" style="left:298px;width:31px"></div>
<div class="ul" style="left:332.400px;width:35.600px"></div>
<div class="ul" style="left:371.700px;width:31px"></div>
<div class="ul" style="left:408.500px;width:30.500px"></div>
<div class="ul" style="left:445.400px;width:30.500px"></div>
<div class="ul" style="left:482.200px;width:31px"></div>
<!-- tray -->
<svg class="abs" style="left:764px;top:11.500px" width="10" height="7" viewBox="0 0 10 7"><path d="M.6 6.200L5 1.600 9.400 6.200" fill="none" stroke="#fff" stroke-width=".95"/></svg>
<svg class="abs" style="left:785px;top:9.500px" width="15" height="11" viewBox="0 0 15 11"><rect x="4" y="3" width="10" height="6" fill="none" stroke="#fff" stroke-width=".9"/><rect x="5.300" y="4.300" width="7.400" height="3.400" fill="#fff"/><path d="M2.500 0v3M.8 2.500h3.500v2.200H.8zM2.500 4.700V6.500H4" fill="none" stroke="#fff" stroke-width=".8"/></svg>
<svg class="abs" style="left:811px;top:9.500px" width="12" height="12" viewBox="0 0 12 12"><path d="M1 11A10 10 0 0 1 11 1" fill="none" stroke="#cfcfcf" stroke-width="1"/><path d="M3.500 11A7.500 7.500 0 0 1 11 3.500" fill="none" stroke="#cfcfcf" stroke-width="1"/><path d="M6 11a5 5 0 0 1 5-5" fill="none" stroke="#cfcfcf" stroke-width="1"/><path d="M8.300 11a2.700 2.700 0 0 1 2.700-2.700V11z" fill="#cfcfcf"/></svg>
<svg class="abs" style="left:833px;top:9px" width="14" height="12" viewBox="0 0 14 12"><path d="M.8 4h2.400L6.500 1v10L3.200 8H.8z" fill="none" stroke="#fff" stroke-width=".9"/><path d="M8.500 3.800a3 3 0 0 1 0 4.400M10.300 2.200a5.300 5.300 0 0 1 0 7.600" fill="none" stroke="#d0d0d0" stroke-width=".9"/></svg>
<div class="abs" style="left:852.800px;top:0;width:29.200px;height:30px;background:#1f2124"></div>
<svg class="abs" style="left:860px;top:8.500px" width="15" height="14" viewBox="0 0 15 14"><circle cx="3.300" cy="9.500" r="1.500" fill="none" stroke="#fff" stroke-width="1"/><path d="M4.500 8.500C6.500 6.500 8.500 3.800 10 2.300c1-1 2.300-.9 2.300.4 0 1.200-1.300 2.800-2.500 4.400C8.500 8.800 7 10.800 6 12.300M9.300 7.800c1.500-1.500 3.500-2.300 4.700-1.500" fill="none" stroke="#fff" stroke-width="1.100" stroke-linecap="round"/></svg>
<svg class="abs" style="left:888px;top:10px" width="18" height="10" viewBox="0 0 18 10"><rect x=".5" y=".5" width="17" height="9" fill="none" stroke="#fff" stroke-width=".9"/><path d="M2.500 3.200h13M2.500 5.200h13" stroke="#fff" stroke-width="1" stroke-dasharray="1 1.400"/><path d="M5 7.300h8" stroke="#fff" stroke-width=".8"/><rect x="1" y="1" width="16" height="8" fill="#101010" opacity=".35"/></svg>
<div class="abs" style="left:915.500px;top:6.500px;font-size:15px;line-height:17px;color:#fff;transform:scaleX(.88);transform-origin:0 0;-webkit-text-stroke:.35px #0a0b0d">A</div>
<div class="clock" style="top:3px">0:11</div>
<div class="clock" style="top:17px;letter-spacing:-0.1px">2017/03/12</div>
<svg class="abs" style="left:992px;top:9px" width="14" height="13" viewBox="0 0 14 13"><path d="M.6.600h12.800v8.800H8.500L7 11.800 5.500 9.400H.6z" fill="none" stroke="#fff" stroke-width="1.100"/></svg>
</div>
<svg id="scribble" class="abs" style="left:0;top:0;pointer-events:none" width="1024" height="683" viewBox="0 0 1024 683"><path fill="#ea1a1d" d="M997.1 90.3 L996.9 90.4 L996.6 90.5 L996.4 90.7 L996.1 90.9 L995.8 91.0 L995.5 91.2 L995.1 91.4 L994.8 91.6 L994.4 91.8 L994.1 91.9 L993.8 92.0 L993.4 92.1 L993.1 92.2 L992.8 92.3 L992.4 92.3 L992.1 92.4 L991.7 92.4 L991.3 92.4 L990.9 92.4 L990.4 92.4 L989.9 92.5 L989.3 92.5 L988.6 92.5 L987.9 92.6 L987.1 92.7 L986.2 92.8 L985.3 92.9 L984.3 93.0 L983.3 93.1 L982.2 93.2 L981.1 93.3 L980.0 93.4 L978.8 93.5 L977.7 93.6 L976.6 93.7 L975.5 93.8 L974.4 93.9 L973.4 94.0 L972.3 94.1 L971.2 94.2 L970.2 94.3 L969.1 94.3 L968.0 94.4 L966.8 94.5 L965.7 94.6 L964.5 94.7 L963.2 94.8 L961.9 94.9 L960.7 94.9 L959.5 95.0 L958.3 95.1 L957.1 95.2 L956.0 95.3 L954.7 95.4 L953.4 95.5 L951.9 95.6 L950.2 95.7 L948.4 95.7 L946.3 95.8 L944.0 95.9 L941.4 95.9 L938.5 95.9 L935.4 96.0 L932.1 96.0 L928.7 96.1 L925.1 96.1 L921.4 96.1 L917.6 96.1 L913.8 96.1 L909.9 96.1 L905.9 96.1 L902.0 96.0 L898.1 95.9 L894.1 95.8 L890.1 95.7 L886.0 95.6 L881.8 95.4 L877.6 95.2 L873.2 95.1 L868.8 94.9 L864.3 94.7 L859.6 94.6 L854.9 94.4 L850.0 94.3 L845.0 94.2 L840.0 94.1 L834.8 93.9 L829.6 93.8 L824.2 93.7 L818.8 93.6 L813.2 93.5 L807.6 93.4 L801.8 93.3 L795.8 93.2 L789.8 93.1 L783.6 93.0 L777.1 92.9 L770.0 92.8 L762.5 92.7 L754.8 92.6 L747.0 92.5 L739.1 92.4 L731.5 92.2 L724.1 92.1 L717.1 92.0 L710.7 91.9 L704.9 91.8 L700.0 91.7 L696.0 91.6 L692.7 91.5 L690.1 91.4 L688.1 91.2 L686.4 91.1 L685.1 91.0 L683.9 90.9 L682.8 90.8 L681.6 90.7 L680.2 90.5 L678.6 90.4 L676.6 90.3 L674.2 90.2 L671.8 90.0 L669.3 89.9 L666.7 89.8 L664.1 89.7 L661.4 89.5 L658.7 89.4 L656.0 89.3 L653.2 89.1 L650.5 89.0 L647.9 88.8 L645.2 88.7 L642.6 88.6 L640.0 88.4 L637.4 88.3 L634.8 88.1 L632.2 88.0 L629.7 87.8 L627.1 87.7 L624.5 87.5 L621.9 87.4 L619.3 87.2 L616.7 87.0 L614.1 86.9 L611.5 86.7 L608.9 86.5 L606.3 86.2 L603.6 86.0 L601.0 85.8 L598.4 85.6 L595.8 85.3 L593.2 85.1 L590.6 84.9 L588.0 84.7 L585.4 84.5 L582.8 84.3 L580.2 84.1 L577.6 84.0 L575.0 83.8 L572.4 83.6 L569.8 83.5 L567.2 83.3 L564.6 83.2 L562.0 83.0 L559.4 82.9 L556.8 82.8 L554.1 82.6 L551.5 82.5 L548.9 82.4 L546.3 82.2 L543.7 82.1 L541.1 82.0 L538.5 81.9 L535.9 81.7 L533.3 81.6 L530.7 81.5 L528.1 81.4 L525.4 81.3 L522.8 81.3 L520.2 81.2 L517.7 81.2 L515.4 81.1 L513.1 81.1 L511.0 81.1 L508.8 81.0 L506.6 81.0 L504.2 81.0 L501.7 81.1 L499.0 81.1 L496.0 81.1 L492.7 81.2 L489.0 81.2 L484.8 81.3 L480.1 81.3 L475.0 81.4 L469.5 81.5 L463.9 81.7 L458.1 81.8 L452.3 81.9 L446.6 82.0 L441.1 82.2 L435.8 82.3 L430.9 82.4 L426.5 82.5 L422.4 82.6 L418.4 82.7 L414.6 82.8 L411.0 82.9 L407.5 83.0 L404.2 83.1 L401.1 83.2 L398.2 83.3 L395.6 83.4 L393.1 83.5 L390.9 83.6 L389.0 83.7 L387.3 83.8 L386.0 83.9 L385.0 83.9 L384.3 84.0 L383.8 84.1 L383.4 84.2 L383.0 84.3 L382.8 84.4 L382.6 84.5 L382.6 84.6 L382.5 84.7 L382.2 84.8 L381.8 84.9 L381.4 85.1 L381.0 85.2 L380.7 85.4 L380.4 85.6 L380.1 85.8 L379.8 86.0 L379.5 86.3 L379.3 86.6 L379.0 86.8 L378.8 87.1 L378.5 87.4 L378.3 87.8 L378.0 88.2 L377.8 88.6 L377.6 89.0 L377.4 89.4 L377.2 89.8 L377.0 90.3 L376.8 90.7 L376.6 91.2 L376.4 91.7 L376.2 92.2 L376.1 92.6 L375.9 93.1 L375.7 93.5 L375.5 93.9 L375.3 94.3 L375.1 94.7 L374.9 95.2 L374.7 95.8 L374.6 96.4 L374.4 97.1 L374.2 97.9 L374.0 98.8 L373.9 99.9 L373.7 101.1 L373.6 102.4 L373.4 103.8 L373.3 105.4 L373.1 107.0 L373.0 108.7 L372.9 110.5 L372.8 112.3 L372.6 114.1 L372.5 116.0 L372.4 117.9 L372.3 119.7 L372.2 121.6 L372.1 123.6 L371.9 125.6 L371.8 127.7 L371.7 129.7 L371.5 131.9 L371.4 134.0 L371.3 136.2 L371.2 138.3 L371.2 140.5 L371.2 142.6 L371.2 144.7 L371.2 146.8 L371.2 148.8 L371.2 150.8 L371.3 152.9 L371.4 154.9 L371.5 156.9 L371.6 159.0 L371.7 161.0 L371.9 163.1 L372.1 165.3 L372.3 167.5 L372.6 169.7 L372.8 172.1 L373.2 174.5 L373.5 176.9 L373.9 179.4 L374.3 181.9 L374.7 184.4 L375.1 187.0 L375.6 189.5 L376.0 192.1 L376.5 194.6 L377.0 197.2 L377.5 199.7 L378.0 202.2 L378.5 204.7 L379.1 207.2 L379.7 209.7 L380.3 212.2 L380.9 214.7 L381.5 217.2 L382.1 219.7 L382.7 222.2 L383.3 224.7 L383.8 227.1 L384.3 229.6 L384.8 232.1 L385.3 234.6 L385.8 237.0 L386.2 239.5 L386.7 242.0 L387.1 244.4 L387.6 246.9 L388.0 249.4 L388.4 251.8 L388.8 254.3 L389.2 256.8 L389.6 259.3 L390.0 261.7 L390.4 264.2 L390.8 266.7 L391.2 269.2 L391.6 271.7 L391.9 274.2 L392.3 276.7 L392.7 279.2 L393.0 281.7 L393.4 284.2 L393.7 286.7 L394.0 289.2 L394.3 291.7 L394.6 294.2 L394.9 296.8 L395.2 299.3 L395.5 301.8 L395.8 304.3 L396.1 306.8 L396.3 309.3 L396.5 311.8 L396.8 314.2 L397.0 316.6 L397.2 319.0 L397.4 321.3 L397.6 323.6 L397.8 325.8 L398.0 328.1 L398.1 330.3 L398.3 332.5 L398.4 334.6 L398.5 336.7 L398.6 338.8 L398.7 340.9 L398.8 343.0 L398.8 345.0 L398.8 347.1 L398.8 349.1 L398.7 351.2 L398.7 353.2 L398.6 355.3 L398.5 357.3 L398.4 359.3 L398.3 361.2 L398.1 363.0 L398.0 364.7 L397.9 366.4 L397.9 367.9 L397.8 369.3 L397.7 370.4 L397.6 371.5 L397.6 372.4 L397.5 373.3 L397.4 374.1 L397.3 374.9 L397.3 375.7 L397.2 376.6 L397.1 377.6 L397.1 378.7 L397.0 379.9 L396.9 381.3 L396.9 382.8 L396.8 384.4 L396.7 386.0 L396.7 387.7 L396.6 389.5 L396.5 391.2 L396.5 392.9 L396.4 394.6 L396.3 396.1 L396.3 397.6 L396.3 398.9 L396.2 400.1 L396.2 401.2 L396.1 402.3 L396.1 403.3 L396.1 404.3 L396.1 405.2 L396.1 406.0 L396.0 406.8 L396.0 407.6 L396.0 408.4 L396.0 409.1 L396.0 409.9 L396.0 410.6 L396.0 411.3 L396.0 412.0 L396.0 412.6 L396.0 413.2 L396.0 413.8 L396.1 414.4 L396.1 414.9 L396.1 415.3 L396.1 415.8 L396.1 416.1 L396.1 416.4 L397.1 416.6 L397.2 416.3 L397.3 415.9 L397.4 415.5 L397.5 415.1 L397.7 414.6 L397.9 414.1 L398.0 413.5 L398.2 412.9 L398.4 412.2 L398.5 411.6 L398.7 410.9 L398.8 410.1 L398.9 409.4 L399.0 408.7 L399.2 407.9 L399.3 407.1 L399.4 406.3 L399.5 405.4 L399.6 404.5 L399.7 403.5 L399.9 402.5 L400.0 401.5 L400.1 400.3 L400.1 399.1 L400.2 397.8 L400.3 396.3 L400.4 394.7 L400.5 393.1 L400.5 391.4 L400.6 389.6 L400.7 387.9 L400.7 386.2 L400.8 384.5 L400.9 382.9 L400.9 381.5 L401.0 380.1 L401.1 378.9 L401.1 377.9 L401.2 376.9 L401.2 376.0 L401.3 375.2 L401.4 374.4 L401.4 373.6 L401.5 372.7 L401.6 371.7 L401.6 370.7 L401.7 369.5 L401.7 368.1 L401.8 366.6 L401.9 365.0 L402.0 363.2 L402.1 361.4 L402.2 359.5 L402.3 357.5 L402.4 355.5 L402.5 353.4 L402.6 351.3 L402.6 349.2 L402.6 347.1 L402.6 345.0 L402.5 342.9 L402.5 340.8 L402.4 338.7 L402.3 336.5 L402.1 334.4 L402.0 332.2 L401.8 330.0 L401.6 327.8 L401.4 325.5 L401.2 323.3 L401.0 321.0 L400.8 318.6 L400.6 316.3 L400.3 313.9 L400.1 311.4 L399.8 309.0 L399.5 306.5 L399.3 303.9 L399.0 301.4 L398.7 298.9 L398.4 296.3 L398.0 293.8 L397.7 291.3 L397.4 288.8 L397.0 286.3 L396.7 283.8 L396.3 281.3 L396.0 278.8 L395.6 276.3 L395.2 273.7 L394.8 271.2 L394.4 268.7 L394.0 266.2 L393.6 263.7 L393.2 261.2 L392.8 258.7 L392.4 256.3 L391.9 253.8 L391.5 251.3 L391.1 248.8 L390.6 246.3 L390.2 243.9 L389.7 241.4 L389.3 238.9 L388.8 236.4 L388.3 234.0 L387.8 231.5 L387.3 229.0 L386.7 226.5 L386.1 224.0 L385.5 221.5 L384.9 219.0 L384.3 216.5 L383.7 214.0 L383.0 211.5 L382.4 209.0 L381.8 206.6 L381.2 204.1 L380.6 201.6 L380.1 199.1 L379.6 196.6 L379.1 194.1 L378.6 191.6 L378.1 189.0 L377.7 186.5 L377.2 184.0 L376.8 181.5 L376.4 179.0 L376.0 176.5 L375.7 174.1 L375.3 171.7 L375.0 169.5 L374.8 167.2 L374.5 165.0 L374.3 162.9 L374.2 160.8 L374.0 158.8 L373.9 156.8 L373.8 154.8 L373.7 152.8 L373.6 150.8 L373.5 148.8 L373.5 146.7 L373.4 144.7 L373.4 142.6 L373.5 140.5 L373.5 138.4 L373.6 136.3 L373.7 134.1 L373.8 132.0 L373.9 129.9 L374.0 127.8 L374.1 125.7 L374.3 123.7 L374.4 121.8 L374.5 119.9 L374.6 118.0 L374.7 116.1 L374.8 114.3 L374.9 112.4 L375.0 110.6 L375.2 108.9 L375.3 107.2 L375.4 105.6 L375.5 104.0 L375.7 102.6 L375.8 101.3 L375.9 100.1 L376.1 99.1 L376.2 98.3 L376.4 97.5 L376.5 96.9 L376.7 96.4 L376.9 95.9 L377.0 95.5 L377.2 95.1 L377.4 94.7 L377.6 94.3 L377.7 93.9 L377.9 93.4 L378.1 92.8 L378.3 92.4 L378.5 91.9 L378.6 91.5 L378.8 91.0 L379.0 90.6 L379.1 90.2 L379.3 89.8 L379.5 89.5 L379.7 89.2 L379.9 88.8 L380.1 88.6 L380.3 88.3 L380.5 88.0 L380.7 87.8 L380.8 87.6 L381.0 87.4 L381.2 87.3 L381.4 87.1 L381.6 87.0 L381.9 86.9 L382.1 86.7 L382.4 86.6 L382.8 86.4 L383.2 86.3 L383.5 86.1 L383.7 86.0 L383.8 85.9 L383.8 85.9 L383.8 85.9 L384.1 85.8 L384.5 85.8 L385.2 85.7 L386.1 85.7 L387.4 85.6 L389.0 85.5 L391.0 85.4 L393.2 85.3 L395.6 85.2 L398.3 85.1 L401.2 85.0 L404.3 84.9 L407.6 84.8 L411.0 84.7 L414.7 84.6 L418.5 84.5 L422.4 84.4 L426.5 84.3 L431.0 84.2 L435.9 84.1 L441.1 84.0 L446.7 83.8 L452.4 83.7 L458.2 83.6 L463.9 83.5 L469.6 83.3 L475.0 83.2 L480.1 83.1 L484.8 83.1 L489.0 83.0 L492.7 83.0 L496.0 82.9 L499.0 82.9 L501.7 82.9 L504.2 82.8 L506.6 82.8 L508.8 82.8 L510.9 82.9 L513.1 82.9 L515.3 82.9 L517.7 83.0 L520.2 83.0 L522.8 83.1 L525.4 83.1 L528.0 83.2 L530.6 83.3 L533.2 83.4 L535.8 83.5 L538.4 83.7 L541.0 83.8 L543.6 83.9 L546.2 84.0 L548.8 84.2 L551.5 84.3 L554.1 84.4 L556.7 84.6 L559.3 84.7 L561.9 84.8 L564.5 85.0 L567.0 85.1 L569.6 85.3 L572.2 85.4 L574.8 85.6 L577.4 85.7 L580.0 85.9 L582.6 86.1 L585.2 86.3 L587.8 86.5 L590.4 86.7 L593.1 86.9 L595.7 87.1 L598.3 87.4 L600.9 87.6 L603.5 87.8 L606.1 88.0 L608.7 88.3 L611.3 88.5 L613.9 88.6 L616.5 88.8 L619.1 89.0 L621.7 89.2 L624.3 89.3 L626.9 89.5 L629.5 89.6 L632.1 89.8 L634.7 89.9 L637.3 90.1 L639.9 90.2 L642.5 90.4 L645.2 90.5 L647.8 90.6 L650.5 90.8 L653.2 90.9 L655.9 91.1 L658.6 91.2 L661.3 91.3 L664.0 91.5 L666.6 91.6 L669.2 91.7 L671.7 91.8 L674.1 92.0 L676.4 92.1 L678.5 92.2 L680.1 92.3 L681.4 92.5 L682.6 92.6 L683.7 92.7 L684.9 92.8 L686.3 92.9 L687.9 93.0 L690.0 93.2 L692.7 93.3 L695.9 93.4 L700.0 93.5 L704.9 93.6 L710.6 93.7 L717.1 93.8 L724.0 93.9 L731.4 94.0 L739.1 94.2 L746.9 94.3 L754.8 94.4 L762.5 94.5 L770.0 94.6 L777.0 94.7 L783.6 94.8 L789.8 94.9 L795.8 95.0 L801.7 95.1 L807.5 95.2 L813.2 95.3 L818.8 95.4 L824.2 95.5 L829.6 95.6 L834.8 95.7 L839.9 95.9 L845.0 96.0 L850.0 96.1 L854.8 96.2 L859.6 96.4 L864.2 96.5 L868.7 96.7 L873.2 96.9 L877.5 97.0 L881.7 97.2 L885.9 97.3 L890.0 97.5 L894.1 97.6 L898.0 97.7 L902.0 97.8 L905.9 97.9 L909.8 97.9 L913.8 97.9 L917.6 97.9 L921.4 98.0 L925.1 97.9 L928.7 97.9 L932.2 97.9 L935.4 97.9 L938.5 97.8 L941.4 97.8 L944.0 97.7 L946.4 97.7 L948.5 97.6 L950.3 97.6 L952.0 97.5 L953.5 97.4 L954.8 97.3 L956.1 97.2 L957.3 97.1 L958.4 97.0 L959.6 96.9 L960.8 96.8 L962.1 96.7 L963.4 96.7 L964.6 96.6 L965.8 96.5 L967.0 96.4 L968.1 96.4 L969.2 96.3 L970.3 96.2 L971.4 96.1 L972.5 96.1 L973.5 96.0 L974.6 95.9 L975.7 95.8 L976.8 95.7 L977.9 95.6 L979.0 95.5 L980.2 95.4 L981.3 95.3 L982.4 95.2 L983.5 95.1 L984.5 95.0 L985.5 94.9 L986.4 94.8 L987.3 94.7 L988.1 94.6 L988.8 94.5 L989.4 94.5 L990.0 94.5 L990.5 94.4 L991.0 94.4 L991.4 94.4 L991.9 94.4 L992.3 94.4 L992.7 94.3 L993.1 94.3 L993.5 94.2 L994.0 94.1 L994.4 93.9 L994.9 93.7 L995.3 93.5 L995.7 93.3 L996.1 93.0 L996.5 92.8 L996.8 92.6 L997.1 92.3 L997.4 92.1 L997.6 92.0 L997.8 91.8 L997.9 91.7Z"/><path fill="#ea1a1d" d="M389.9 405.5 L390.0 405.4 L390.1 405.2 L390.3 405.1 L390.4 404.9 L390.5 404.7 L390.7 404.5 L390.8 404.4 L391.0 404.2 L391.1 404.1 L391.2 404.0 L391.4 404.0 L391.6 403.8 L392.0 403.5 L392.3 402.7 L392.3 402.2 L392.3 402.0 L392.4 402.3 L392.1 402.9 L391.8 403.3 L391.7 403.4 L391.9 403.3 L392.4 403.3 L393.2 403.2 L394.2 403.1 L395.4 403.0 L396.7 402.9 L398.0 402.7 L399.4 402.6 L401.0 402.5 L402.8 402.4 L404.8 402.2 L407.1 402.1 L409.8 402.0 L412.8 401.9 L416.2 401.9 L420.0 401.8 L424.5 401.8 L429.5 401.7 L435.1 401.7 L441.0 401.7 L447.3 401.7 L453.9 401.7 L460.5 401.8 L467.3 401.8 L473.9 401.8 L480.5 401.8 L486.8 401.8 L492.8 401.8 L498.6 401.8 L504.4 401.8 L510.2 401.8 L516.0 401.8 L521.8 401.8 L527.4 401.7 L533.0 401.7 L538.5 401.7 L543.9 401.7 L549.2 401.7 L554.3 401.7 L559.2 401.8 L563.9 401.9 L568.4 401.9 L572.8 402.0 L577.0 402.1 L581.1 402.2 L585.1 402.3 L589.0 402.4 L592.9 402.5 L596.9 402.7 L600.8 402.9 L604.8 403.1 L608.9 403.3 L613.1 403.6 L617.4 404.0 L621.7 404.4 L626.1 404.8 L630.5 405.2 L634.9 405.6 L639.2 406.1 L643.4 406.6 L647.5 407.0 L651.4 407.5 L655.1 407.9 L658.6 408.3 L661.8 408.7 L664.7 409.1 L667.4 409.5 L670.0 409.9 L672.4 410.3 L674.7 410.7 L677.0 411.1 L679.4 411.5 L681.8 411.8 L684.3 412.1 L687.0 412.4 L689.9 412.7 L693.0 412.9 L696.3 413.1 L699.8 413.3 L703.3 413.4 L707.0 413.6 L710.6 413.7 L714.2 413.8 L717.7 413.9 L721.1 413.9 L724.3 414.0 L727.3 414.1 L730.0 414.1 L732.2 414.2 L734.0 414.2 L735.4 414.2 L736.6 414.2 L737.6 414.2 L738.6 414.2 L739.6 414.2 L740.9 414.2 L742.5 414.2 L744.5 414.2 L747.1 414.2 L750.4 414.3 L754.3 414.4 L759.0 414.5 L764.1 414.5 L769.7 414.6 L775.6 414.8 L781.7 414.9 L787.9 415.0 L794.2 415.1 L800.2 415.3 L806.1 415.5 L811.6 415.6 L816.7 415.8 L821.6 416.0 L826.4 416.2 L831.1 416.5 L835.8 416.8 L840.3 417.1 L844.7 417.3 L848.9 417.6 L853.0 417.9 L856.8 418.1 L860.3 418.3 L863.6 418.5 L866.5 418.6 L869.0 418.7 L871.0 418.8 L872.7 418.8 L874.0 418.9 L875.1 418.8 L876.0 418.8 L876.9 418.8 L877.8 418.7 L878.8 418.6 L880.0 418.5 L881.4 418.4 L883.3 418.3 L885.5 418.2 L887.9 418.0 L890.4 417.9 L893.1 417.7 L896.0 417.5 L898.9 417.3 L901.8 417.1 L904.8 416.8 L907.8 416.6 L910.8 416.3 L913.7 416.0 L916.6 415.7 L919.4 415.4 L922.2 415.0 L925.1 414.6 L928.0 414.2 L930.9 413.8 L933.8 413.4 L936.7 412.9 L939.5 412.5 L942.2 412.0 L944.9 411.6 L947.4 411.1 L949.9 410.6 L952.2 410.1 L954.6 409.6 L956.9 409.1 L959.1 408.6 L961.2 408.0 L963.3 407.5 L965.3 406.9 L967.2 406.4 L969.0 405.9 L970.7 405.5 L972.3 405.0 L973.7 404.7 L975.1 404.3 L976.3 404.0 L977.4 403.8 L978.3 403.5 L979.2 403.3 L980.0 403.1 L980.8 402.9 L981.5 402.7 L982.2 402.6 L982.9 402.4 L983.6 402.2 L984.3 402.1 L985.1 401.9 L985.8 401.7 L986.6 401.6 L987.3 401.4 L988.0 401.3 L988.7 401.1 L989.3 401.0 L990.0 400.8 L990.6 400.7 L991.2 400.6 L991.8 400.4 L992.4 400.2 L992.9 400.1 L993.4 399.9 L993.8 399.8 L994.3 399.7 L994.7 399.5 L995.1 399.4 L995.5 399.2 L995.9 399.0 L996.2 398.8 L996.6 398.6 L997.0 398.4 L997.3 398.1 L997.7 397.9 L998.0 397.6 L998.3 397.3 L998.6 397.0 L998.9 396.7 L999.2 396.4 L999.5 396.0 L999.7 395.7 L1000.0 395.3 L1000.2 395.0 L1000.5 394.6 L1000.7 394.2 L1000.9 393.8 L1001.2 393.4 L1001.4 393.0 L1001.6 392.5 L1001.9 392.1 L1002.1 391.6 L1002.3 391.1 L1002.5 390.6 L1002.7 390.2 L1002.9 389.7 L1003.1 389.2 L1003.3 388.7 L1003.4 388.2 L1003.6 387.7 L1003.8 387.2 L1003.9 386.7 L1004.1 386.2 L1004.2 385.7 L1004.4 385.1 L1004.5 384.6 L1004.6 384.0 L1004.8 383.5 L1004.9 382.9 L1005.0 382.3 L1005.1 381.7 L1005.3 381.1 L1005.4 380.5 L1005.5 379.9 L1005.6 379.2 L1005.7 378.6 L1005.8 377.9 L1005.9 377.2 L1006.0 376.4 L1006.2 375.6 L1006.3 374.7 L1006.4 373.7 L1006.6 372.6 L1006.8 371.5 L1006.9 370.3 L1007.1 369.0 L1007.3 367.7 L1007.5 366.4 L1007.7 365.0 L1007.9 363.5 L1008.1 362.0 L1008.3 360.4 L1008.5 358.8 L1008.7 357.2 L1008.9 355.4 L1009.1 353.7 L1009.3 351.8 L1009.5 349.9 L1009.7 347.9 L1009.9 345.9 L1010.1 343.9 L1010.3 341.9 L1010.5 339.8 L1010.7 337.8 L1010.9 335.8 L1011.1 333.8 L1011.3 331.9 L1011.5 329.9 L1011.7 328.0 L1011.9 326.0 L1012.1 324.1 L1012.3 322.1 L1012.5 320.1 L1012.7 318.2 L1012.9 316.2 L1013.1 314.2 L1013.3 312.3 L1013.4 310.3 L1013.6 308.4 L1013.8 306.4 L1013.9 304.4 L1014.1 302.5 L1014.2 300.5 L1014.4 298.6 L1014.5 296.6 L1014.6 294.7 L1014.7 292.7 L1014.9 290.8 L1015.0 288.8 L1015.0 286.9 L1015.1 284.9 L1015.2 282.9 L1015.3 281.0 L1015.3 279.0 L1015.4 277.1 L1015.4 275.1 L1015.5 273.2 L1015.5 271.2 L1015.5 269.3 L1015.5 267.3 L1015.5 265.4 L1015.5 263.4 L1015.5 261.4 L1015.5 259.4 L1015.5 257.3 L1015.5 255.3 L1015.4 253.2 L1015.4 251.2 L1015.3 249.2 L1015.2 247.2 L1015.2 245.3 L1015.1 243.4 L1015.1 241.6 L1015.0 240.0 L1015.0 238.4 L1015.0 237.0 L1015.0 235.7 L1014.9 234.5 L1014.9 233.4 L1014.9 232.2 L1014.9 231.1 L1014.8 229.9 L1014.8 228.7 L1014.8 227.4 L1014.7 226.0 L1014.6 224.4 L1014.6 222.8 L1014.5 221.0 L1014.4 219.1 L1014.3 217.2 L1014.2 215.2 L1014.1 213.2 L1014.0 211.1 L1013.9 209.0 L1013.8 207.0 L1013.7 204.9 L1013.6 202.9 L1013.4 200.9 L1013.3 199.0 L1013.2 197.0 L1013.1 195.1 L1012.9 193.1 L1012.8 191.2 L1012.7 189.2 L1012.5 187.3 L1012.4 185.4 L1012.2 183.4 L1012.1 181.5 L1012.0 179.6 L1011.8 177.6 L1011.7 175.7 L1011.6 173.7 L1011.5 171.8 L1011.3 169.8 L1011.2 167.9 L1011.1 165.9 L1011.0 164.0 L1010.9 162.0 L1010.7 160.1 L1010.6 158.1 L1010.5 156.2 L1010.3 154.2 L1010.2 152.3 L1010.1 150.3 L1009.9 148.3 L1009.8 146.4 L1009.7 144.4 L1009.5 142.5 L1009.4 140.5 L1009.3 138.5 L1009.1 136.6 L1009.0 134.6 L1008.9 132.7 L1008.7 130.7 L1008.6 128.7 L1008.5 126.7 L1008.4 124.5 L1008.3 122.4 L1008.2 120.2 L1008.1 118.1 L1008.0 116.0 L1007.9 114.0 L1007.8 112.1 L1007.7 110.4 L1007.6 108.8 L1007.5 107.3 L1007.5 106.1 L1007.4 105.0 L1007.3 104.0 L1007.2 103.2 L1007.1 102.5 L1007.0 101.8 L1006.9 101.2 L1006.8 100.7 L1006.7 100.2 L1006.7 99.7 L1006.6 99.1 L1006.5 98.5 L1006.4 97.9 L1006.3 97.3 L1006.2 96.6 L1006.1 96.0 L1006.0 95.4 L1006.0 94.8 L1005.9 94.2 L1005.8 93.7 L1005.7 93.2 L1005.6 92.7 L1005.5 92.2 L1005.4 91.8 L1005.4 91.5 L1005.3 91.1 L1005.2 90.8 L1005.1 90.6 L1005.0 90.3 L1004.9 90.1 L1004.8 89.9 L1004.7 89.7 L1004.7 89.6 L1004.6 89.4 L1004.5 89.3 L1004.5 89.2 L1003.3 89.4 L1003.3 89.5 L1003.3 89.6 L1003.3 89.8 L1003.2 90.0 L1003.2 90.2 L1003.2 90.4 L1003.2 90.6 L1003.1 90.8 L1003.1 91.1 L1003.1 91.4 L1003.1 91.8 L1003.2 92.2 L1003.2 92.6 L1003.2 93.0 L1003.3 93.5 L1003.3 94.0 L1003.4 94.6 L1003.5 95.1 L1003.5 95.7 L1003.6 96.3 L1003.7 97.0 L1003.8 97.6 L1003.8 98.2 L1003.9 98.9 L1004.0 99.5 L1004.1 100.1 L1004.1 100.6 L1004.2 101.1 L1004.3 101.6 L1004.4 102.2 L1004.4 102.8 L1004.5 103.5 L1004.6 104.3 L1004.7 105.2 L1004.8 106.3 L1004.9 107.5 L1004.9 108.9 L1005.0 110.5 L1005.1 112.3 L1005.2 114.2 L1005.3 116.2 L1005.4 118.2 L1005.5 120.4 L1005.6 122.5 L1005.7 124.7 L1005.8 126.8 L1005.9 128.9 L1006.1 130.9 L1006.2 132.8 L1006.3 134.8 L1006.4 136.8 L1006.6 138.7 L1006.7 140.7 L1006.8 142.6 L1007.0 144.6 L1007.1 146.6 L1007.3 148.5 L1007.4 150.5 L1007.5 152.4 L1007.7 154.4 L1007.8 156.3 L1007.9 158.3 L1008.0 160.2 L1008.2 162.2 L1008.3 164.1 L1008.4 166.1 L1008.5 168.0 L1008.6 170.0 L1008.8 171.9 L1008.9 173.9 L1009.0 175.8 L1009.2 177.8 L1009.3 179.7 L1009.4 181.7 L1009.6 183.6 L1009.7 185.6 L1009.8 187.5 L1010.0 189.4 L1010.1 191.4 L1010.2 193.3 L1010.4 195.3 L1010.5 197.2 L1010.6 199.1 L1010.8 201.1 L1010.9 203.1 L1011.0 205.1 L1011.1 207.1 L1011.2 209.2 L1011.3 211.3 L1011.4 213.3 L1011.5 215.3 L1011.6 217.3 L1011.7 219.2 L1011.8 221.1 L1011.9 222.9 L1012.0 224.6 L1012.0 226.1 L1012.1 227.5 L1012.1 228.8 L1012.1 230.0 L1012.2 231.2 L1012.2 232.3 L1012.2 233.4 L1012.2 234.6 L1012.3 235.8 L1012.3 237.1 L1012.3 238.5 L1012.4 240.0 L1012.4 241.7 L1012.4 243.5 L1012.5 245.3 L1012.5 247.3 L1012.6 249.2 L1012.7 251.2 L1012.7 253.3 L1012.8 255.3 L1012.8 257.4 L1012.8 259.4 L1012.8 261.4 L1012.9 263.4 L1012.8 265.3 L1012.8 267.3 L1012.8 269.2 L1012.8 271.2 L1012.8 273.1 L1012.7 275.1 L1012.7 277.0 L1012.6 279.0 L1012.6 280.9 L1012.5 282.9 L1012.4 284.8 L1012.4 286.7 L1012.3 288.7 L1012.2 290.6 L1012.0 292.6 L1011.9 294.5 L1011.8 296.5 L1011.7 298.4 L1011.5 300.3 L1011.4 302.3 L1011.2 304.2 L1011.1 306.2 L1010.9 308.1 L1010.8 310.1 L1010.6 312.0 L1010.4 314.0 L1010.2 315.9 L1010.0 317.9 L1009.9 319.9 L1009.7 321.8 L1009.5 323.8 L1009.3 325.7 L1009.1 327.7 L1008.9 329.7 L1008.7 331.6 L1008.5 333.6 L1008.3 335.5 L1008.1 337.5 L1007.9 339.6 L1007.7 341.6 L1007.5 343.6 L1007.3 345.7 L1007.1 347.6 L1006.9 349.6 L1006.7 351.5 L1006.5 353.4 L1006.3 355.1 L1006.1 356.8 L1005.9 358.5 L1005.7 360.1 L1005.5 361.6 L1005.3 363.1 L1005.1 364.6 L1004.9 366.0 L1004.7 367.3 L1004.5 368.6 L1004.3 369.9 L1004.1 371.1 L1003.9 372.2 L1003.8 373.3 L1003.6 374.3 L1003.5 375.2 L1003.4 376.0 L1003.2 376.8 L1003.1 377.5 L1003.0 378.2 L1002.9 378.8 L1002.8 379.4 L1002.7 380.0 L1002.6 380.6 L1002.5 381.1 L1002.4 381.7 L1002.3 382.3 L1002.1 382.9 L1002.0 383.4 L1001.9 383.9 L1001.7 384.5 L1001.6 384.9 L1001.5 385.4 L1001.3 385.9 L1001.2 386.4 L1001.1 386.8 L1000.9 387.3 L1000.7 387.7 L1000.6 388.2 L1000.4 388.7 L1000.2 389.1 L1000.0 389.6 L999.8 390.0 L999.6 390.4 L999.4 390.9 L999.2 391.3 L999.0 391.7 L998.7 392.0 L998.5 392.4 L998.3 392.8 L998.1 393.1 L997.9 393.4 L997.7 393.7 L997.5 394.0 L997.3 394.3 L997.0 394.6 L996.8 394.8 L996.6 395.0 L996.4 395.3 L996.2 395.5 L995.9 395.7 L995.7 395.9 L995.4 396.0 L995.2 396.2 L994.9 396.4 L994.6 396.5 L994.3 396.6 L994.0 396.8 L993.7 396.9 L993.4 397.0 L993.0 397.1 L992.6 397.3 L992.1 397.4 L991.6 397.6 L991.1 397.7 L990.6 397.8 L990.0 398.0 L989.4 398.1 L988.8 398.2 L988.1 398.4 L987.4 398.5 L986.7 398.7 L986.0 398.8 L985.2 399.0 L984.5 399.2 L983.7 399.3 L982.9 399.5 L982.2 399.7 L981.5 399.9 L980.8 400.0 L980.1 400.2 L979.4 400.4 L978.5 400.6 L977.7 400.8 L976.7 401.0 L975.6 401.3 L974.4 401.6 L973.1 401.9 L971.6 402.3 L969.9 402.7 L968.2 403.2 L966.4 403.7 L964.5 404.2 L962.5 404.7 L960.5 405.3 L958.4 405.8 L956.2 406.3 L953.9 406.8 L951.7 407.3 L949.3 407.8 L946.9 408.2 L944.4 408.7 L941.7 409.1 L939.0 409.6 L936.2 410.0 L933.4 410.4 L930.5 410.9 L927.6 411.3 L924.7 411.7 L921.9 412.0 L919.0 412.4 L916.2 412.7 L913.4 413.0 L910.5 413.3 L907.6 413.6 L904.6 413.8 L901.6 414.1 L898.7 414.3 L895.8 414.5 L892.9 414.7 L890.2 414.9 L887.7 415.0 L885.3 415.2 L883.1 415.3 L881.2 415.4 L879.7 415.5 L878.5 415.6 L877.6 415.7 L876.7 415.7 L875.9 415.8 L875.0 415.8 L874.0 415.8 L872.7 415.8 L871.1 415.7 L869.1 415.6 L866.7 415.6 L863.7 415.4 L860.5 415.2 L857.0 415.0 L853.2 414.8 L849.1 414.5 L844.9 414.2 L840.5 413.9 L836.0 413.6 L831.3 413.3 L826.5 413.1 L821.7 412.8 L816.9 412.6 L811.8 412.4 L806.2 412.2 L800.3 412.1 L794.2 411.9 L788.0 411.7 L781.8 411.6 L775.7 411.4 L769.8 411.3 L764.2 411.2 L759.0 411.1 L754.4 411.0 L750.4 410.9 L747.2 410.8 L744.6 410.8 L742.5 410.8 L740.9 410.8 L739.6 410.8 L738.5 410.8 L737.5 410.8 L736.5 410.8 L735.4 410.8 L734.0 410.8 L732.3 410.7 L730.0 410.7 L727.4 410.6 L724.4 410.5 L721.2 410.4 L717.8 410.3 L714.3 410.2 L710.7 410.1 L707.1 410.0 L703.5 409.9 L699.9 409.7 L696.5 409.5 L693.2 409.3 L690.1 409.1 L687.3 408.8 L684.7 408.6 L682.3 408.2 L679.9 407.9 L677.6 407.5 L675.3 407.1 L673.0 406.7 L670.5 406.3 L668.0 405.9 L665.2 405.5 L662.3 405.1 L659.0 404.7 L655.5 404.3 L651.8 403.9 L647.9 403.4 L643.8 403.0 L639.6 402.5 L635.3 402.0 L630.9 401.6 L626.5 401.1 L622.1 400.7 L617.7 400.3 L613.3 400.0 L609.1 399.7 L605.0 399.4 L601.0 399.2 L597.0 399.0 L593.1 398.8 L589.2 398.6 L585.2 398.5 L581.2 398.4 L577.1 398.3 L572.9 398.2 L568.5 398.1 L564.0 398.1 L559.2 398.0 L554.3 397.9 L549.2 397.9 L543.9 397.9 L538.5 397.9 L533.0 397.9 L527.4 397.9 L521.8 397.9 L516.0 397.9 L510.2 397.9 L504.4 397.9 L498.6 398.0 L492.8 398.0 L486.8 397.9 L480.5 397.9 L474.0 397.9 L467.3 397.8 L460.6 397.8 L453.9 397.8 L447.3 397.8 L441.0 397.7 L435.1 397.7 L429.5 397.7 L424.4 397.8 L420.0 397.8 L416.1 397.9 L412.6 397.9 L409.6 398.0 L406.9 398.2 L404.6 398.3 L402.5 398.4 L400.7 398.6 L399.1 398.7 L397.6 398.9 L396.3 399.0 L395.0 399.2 L393.8 399.3 L392.7 399.5 L391.8 399.6 L391.1 399.8 L390.5 400.0 L389.9 400.3 L389.3 401.0 L389.0 401.8 L389.0 402.4 L389.1 402.5 L389.1 402.2 L389.3 401.8 L389.4 401.8 L389.3 402.0 L389.0 402.3 L388.9 402.7 L388.7 403.0 L388.7 403.4 L388.6 403.7 L388.6 403.9 L388.5 404.2 L388.5 404.4 L388.5 404.6 L388.5 404.8 L388.5 404.9Z"/></svg>
</body>
</html>
